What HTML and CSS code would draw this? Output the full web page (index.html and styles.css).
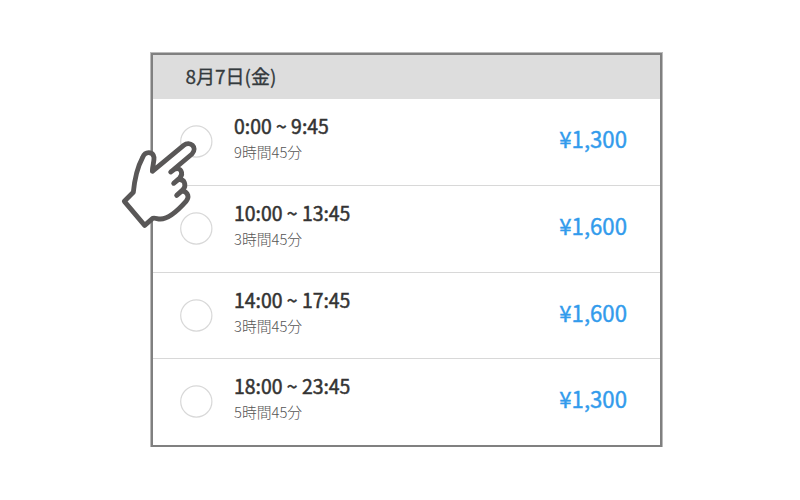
FILE: index.html
```html
<!DOCTYPE html>
<html lang="ja">
<head>
<meta charset="UTF-8">
<meta name="viewport" content="width=device-width, initial-scale=1.0">
<title>時間帯の選択</title>
<link rel="stylesheet" href="styles.css">
</head>
<body>
    <div class="container">
        <h2 class="data">8月7日(金)</h2>
        <div class="lista">
            <div class="item">
                <svg class="radio" viewBox="0 0 33 33"><circle cx="16.3" cy="16.5" r="15.6"/></svg>
                <div class="horario">
                    <p class="hora">0:00 ~ 9:45</p>
                    <p class="duracao">9時間45分</p>
                </div>
                <span class="preco">¥1,300</span>
            </div>
            <div class="item">
                <svg class="radio" viewBox="0 0 33 33"><circle cx="16.3" cy="16.5" r="15.6"/></svg>
                <div class="horario">
                    <p class="hora">10:00 ~ 13:45</p>
                    <p class="duracao">3時間45分</p>
                </div>
                <span class="preco">¥1,600</span>
            </div>
            <div class="item">
                <svg class="radio" viewBox="0 0 33 33"><circle cx="16.3" cy="16.5" r="15.6"/></svg>
                <div class="horario">
                    <p class="hora">14:00 ~ 17:45</p>
                    <p class="duracao">3時間45分</p>
                </div>
                <span class="preco">¥1,600</span>
            </div>
            <div class="item">
                <svg class="radio" viewBox="0 0 33 33"><circle cx="16.3" cy="16.5" r="15.6"/></svg>
                <div class="horario">
                    <p class="hora">18:00 ~ 23:45</p>
                    <p class="duracao">5時間45分</p>
                </div>
                <span class="preco">¥1,300</span>
            </div>
        </div>
        <svg class="mao" viewBox="0 0 360 390">
            <path d="M43 274L70 247C74 205 84 168 98 142C106 122 129 124 132 142C133 154 127 170 127 184L221 106C240 91 264 112 246 132L182 186L193 178C212 170 222 190 209 204L191 220L205 209C224 206 230 226 219 239L200 256L217 242C236 248 238 262 228 274C205 300 175 328 150 327C142 327 136 323 128 325L104 346Z"/>
        </svg>
    </div>
</body>
</html>
```
FILE: styles.css
```css
body {
    font-family: "Noto Sans CJK JP", sans-serif;
    margin: 0;
    padding: 0;
    background-color: #fff;
}

.container {
    position: relative;
    box-sizing: border-box;
    width: 511px;
    height: 394px;
    margin: 53px 0 0 151px;
    border: 2px solid #808080;
    box-shadow: 0 0 0 1px #bbb;
}

.data {
    margin: 0;
    padding-left: 32.5px;
    height: 44px;
    line-height: 42px;
    font-size: 19px;
    font-weight: 400;
    -webkit-text-stroke: 0.3px #343a3d;
    color: #343a3d;
    background-color: #ddd;
}

.item {
    box-sizing: border-box;
    display: flex;
    height: 86.75px;
    padding: 0 33px 0 27px;
    border-bottom: 1px solid #d8d8d8;
}

.item:last-child {
    border-bottom: none;
}

.radio {
    width: 33px;
    height: 33px;
    margin-top: 26px;
}

.radio circle {
    fill: #fff;
    stroke: #d8d8d8;
    stroke-width: 1.2;
}

.horario {
    flex: 1;
    margin-left: 21px;
    padding-top: 13px;
}

.hora {
    margin: 0;
    font-size: 19.4px;
    line-height: 28px;
    font-weight: 400;
    -webkit-text-stroke: 0.5px #333;
    color: #333;
}

.duracao {
    margin: 0;
    font-size: 14.8px;
    line-height: 24px;
    font-weight: 300;
    color: #555;
}

.preco {
    margin-top: 23px;
    font-size: 22.2px;
    line-height: 32px;
    font-weight: 400;
    -webkit-text-stroke: 0.4px #329bec;
    color: #329bec;
}

/* mão apontando, por cima da lista */
.mao {
    position: absolute;
    left: -43px;
    top: 55px;
    width: 120px;
    height: 130px;
}

.mao path {
    fill: #fff;
    stroke: #595757;
    stroke-width: 14.5;
    stroke-linejoin: round;
    stroke-linecap: round;
}
```
